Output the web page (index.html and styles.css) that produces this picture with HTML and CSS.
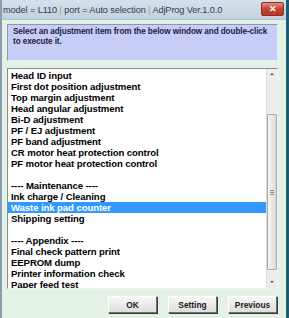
FILE: index.html
```html
<!DOCTYPE html>
<html lang="en">
  <head>
    <meta charset="UTF-8" />
    <title>AdjProg</title>
    <link rel="stylesheet" href="styles.css">
  </head>
  <body>
    <div class="window">
      <div class="titlebar">
        <span class="title">model = L110 <span class="sep">|</span> port = Auto selection <span class="sep">|</span> AdjProg Ver.1.0.0</span>
        <div class="close">&#x2715;</div>
      </div>

      <div class="content">
        <div class="hint">Select an adjustment item from the below window and double-click to execute it.</div>

        <div class="listbox">
          <ul class="items">
            <li>Head ID input</li>
            <li>First dot position adjustment</li>
            <li>Top margin adjustment</li>
            <li>Head angular adjustment</li>
            <li>Bi-D adjustment</li>
            <li>PF / EJ adjustment</li>
            <li>PF band adjustment</li>
            <li>CR motor heat protection control</li>
            <li>PF motor heat protection control</li>
            <li>&nbsp;</li>
            <li>---- Maintenance ----</li>
            <li>Ink charge / Cleaning</li>
            <li class="selected">Waste ink pad counter</li>
            <li>Shipping setting</li>
            <li>&nbsp;</li>
            <li>---- Appendix ----</li>
            <li>Final check pattern print</li>
            <li>EEPROM dump</li>
            <li>Printer information check</li>
            <li>Paper feed test</li>
          </ul>
          <!-- 스크롤바 -->
          <div class="scrollbar">
            <div class="arrow up"></div>
            <div class="track">
              <div class="thumb"><div class="grip"></div></div>
            </div>
            <div class="arrow down"></div>
          </div>
        </div>

        <div class="buttons">
          <button>OK</button>
          <button>Setting</button>
          <button>Previous</button>
        </div>
      </div>
    </div>
  </body>
</html>
```

FILE: styles.css
```css
html,
body {
  margin: 0;
  padding: 0;
  background: #e4f2e5;
}

.window {
  width: 289px;
  height: 318px;
  box-sizing: border-box;
  display: flex;
  flex-direction: column;
  border-left: 2px solid #8a9cae;
  border-right: 3px solid #1f5b6e;
  font-family: "Liberation Sans", Arial, sans-serif;
  overflow: hidden;
}

.titlebar {
  height: 19px;
  flex-shrink: 0;
  display: flex;
  align-items: center;
  justify-content: space-between;
  padding: 0 2px 0 1px;
  background: linear-gradient(to bottom, #d5e0ea, #c3d2df);
  border-bottom: 1px solid #aebfcd;
}

.title {
  font-size: 9.2px;
  color: #2e3d50;
  white-space: nowrap;
  letter-spacing: -0.1px;
}

.sep {
  color: #b9a53a;
}

.close {
  width: 21px;
  height: 12px;
  margin-top: -2px;
  border: 1px solid #8c2f22;
  border-radius: 2px;
  background: linear-gradient(to bottom, #df8f80, #c4442f 50%, #b8361f);
  color: #fff;
  font-size: 9px;
  font-weight: bold;
  line-height: 12px;
  text-align: center;
}

.content {
  flex: 1;
  display: flex;
  flex-direction: column;
  padding: 4px 8px 0 5px;
}

.hint {
  height: 37px;
  box-sizing: border-box;
  padding: 2px 4px 2px 5px;
  background: #c8cdf7;
  border: 1px solid #8f97a6;
  border-color: #8f97a6 #e8eef8 #e8eef8 #8f97a6;
  font-size: 8.2px;
  font-weight: bold;
  letter-spacing: -0.1px;
  line-height: 10px;
  color: #1a2140;
}

.listbox {
  margin-top: 7px;
  height: 221px;
  box-sizing: border-box;
  display: flex;
  background: #fff;
  border: 1px solid #848c94;
  border-color: #848c94 #f0f4f0 #f0f4f0 #848c94;
  overflow: hidden;
}

.items {
  flex: 1;
  list-style: none;
  margin: 0;
  padding: 1px 0 0 0;
  font-size: 9.6px;
  font-weight: bold;
  letter-spacing: -0.1px;
  line-height: 11px;
  color: #000;
}

.items li {
  padding-left: 3px;
  white-space: nowrap;
}

.items .selected {
  background: #3399ff;
  color: #fff;
}

.scrollbar {
  width: 10px;
  display: flex;
  flex-direction: column;
  background: #ececec;
  border-left: 1px solid #dadada;
}

.arrow {
  height: 12px;
  position: relative;
}

.arrow::after {
  content: "";
  position: absolute;
  left: 3px;
  border-left: 2px solid transparent;
  border-right: 2px solid transparent;
}

.up::after {
  top: 4px;
  border-bottom: 2px solid #555;
}

.down::after {
  top: 5px;
  border-top: 2px solid #555;
}

.track {
  flex: 1;
  padding: 33px 0 6px 0;
  display: flex;
}

.thumb {
  flex: 1;
  display: flex;
  align-items: center;
  justify-content: center;
  background: linear-gradient(to right, #f6f6f6, #d8d8d8);
  border: 1px solid #a8a8a8;
  border-radius: 1px;
}

.grip {
  width: 4px;
  height: 5px;
  background: repeating-linear-gradient(to bottom, #8a8a8a 0 1px, #e4e4e4 1px 2px);
}

.buttons {
  display: flex;
  justify-content: flex-end;
  gap: 11px;
  padding: 7px 1px 0 0;
}

.buttons button {
  width: 49px;
  height: 17px;
  padding: 0;
  margin: 0;
  font-family: "Liberation Sans", Arial, sans-serif;
  font-size: 8.4px;
  font-weight: bold;
  color: #1a1a1a;
  background: linear-gradient(to bottom, #f6f6f6, #dedede);
  border: 1px solid;
  border-color: #ffffff #6e6e6e #6e6e6e #ffffff;
  box-shadow: 1px 1px 0 #3c3c3c;
  border-radius: 0;
}
```
